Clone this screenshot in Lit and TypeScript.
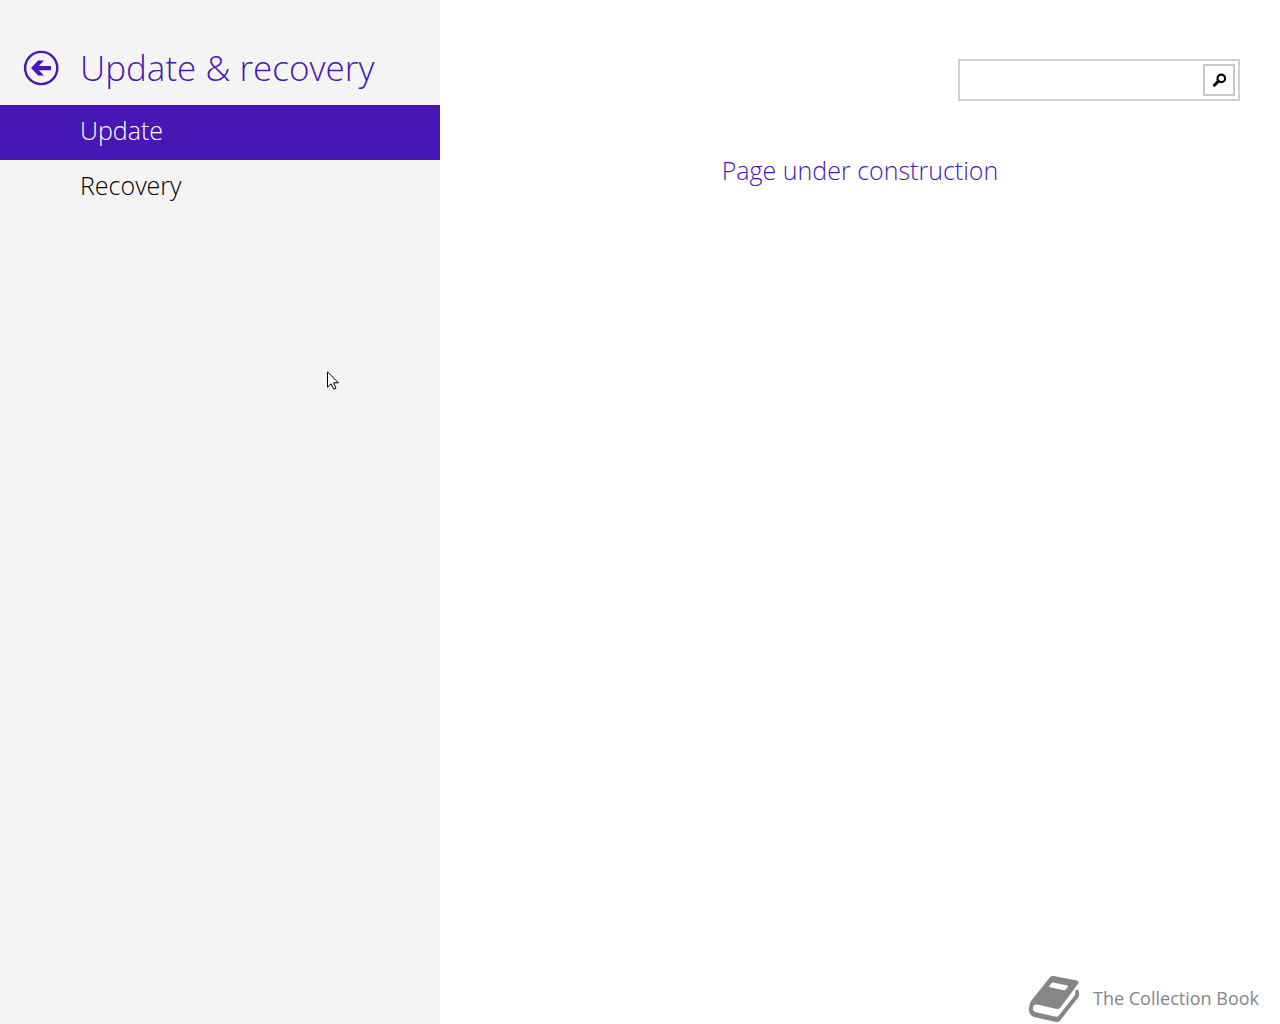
import { LitElement, html, css, svg } from "lit";
import { customElement, state } from "lit/decorators.js";

const backIcon = svg`
  <svg viewBox="0 0 36 36" width="36" height="36" aria-hidden="true">
    <circle cx="18.2" cy="18" r="16.1" fill="none" stroke="currentColor" stroke-width="2.4" />
    <path d="M8 18 L15.2 10.4 H21 L15.8 16 H28 V20.2 H15.8 L21 25.6 H15.2 Z" fill="currentColor" />
  </svg>`;

const searchIcon = svg`
  <svg viewBox="0 0 14 14" width="14" height="14" aria-hidden="true">
    <circle cx="9.3" cy="5.4" r="3.8" fill="none" stroke="currentColor" stroke-width="2.2" />
    <path d="M6.4 8.2 L2.4 12.2" stroke="currentColor" stroke-width="3" stroke-linecap="round" />
  </svg>`;

const bookIcon = svg`
  <svg viewBox="0 0 52 48" width="52" height="48" aria-hidden="true">
    <path
      fill="currentColor"
      fill-rule="evenodd"
      d="M22 2.2 Q23.5 0.6 25.7 1 L49 5.6 Q51.6 6.3 50.2 8.6 L32.5 32.6 Q31 34.4 28.8 33.9 L9 29.6 Q5 29.4 4.9 33 Q4.9 36.4 8 37.3 L28.3 41.8 Q29.8 42 30.8 40.6 L47.2 20 L47.3 16 Q49 13.8 50.6 15.6 Q51.2 17 51.1 19.6 Q51 21.4 50 22.8 L32.4 45.2 Q30.6 47.6 27.8 47 L6 42 Q0.6 40.2 0.9 33.6 Q1 28.6 3.6 25.2 Z
         M23.3 8.2 L21.2 11.2 Q21 12 21.8 12.2 L36 15.2 Q37.2 15.4 37.9 14.5 L40 11.6 Q40.4 10.7 39.4 10.5 L25 7.6 Q24 7.4 23.3 8.2 Z"
    />
  </svg>`;

const pointer = svg`
  <svg viewBox="0 0 12 19" width="12" height="19" aria-hidden="true">
    <path
      d="M0.5 0.8 V16.2 L4.1 12.8 L6.6 18.2 L9 17.2 L6.6 11.8 H11.4 Z"
      fill="#fff"
      stroke="#000"
      stroke-width="1"
    />
  </svg>`;

@customElement("app-root")
export class AppRoot extends LitElement {
  @state() private current = "Update";
  private pages = ["Update", "Recovery"];

  static styles = css`
    :host {
      display: block;
      position: relative;
      font-family: "Open Sans", "Noto Sans", sans-serif;
      font-weight: 300;
      --accent: #4617b4;
    }
    * {
      box-sizing: border-box;
    }
    .layout {
      display: flex;
      min-height: 100vh;
      background: #fff;
    }
    .side {
      flex: 0 0 440px;
      background: #f4f4f4;
      padding-top: 32px;
    }
    .head {
      display: flex;
      align-items: center;
      height: 73px;
      padding: 0 0 2px 23px;
      gap: 21px;
      color: var(--accent);
    }
    .back {
      display: flex;
      padding: 0;
      border: 0;
      background: none;
      color: inherit;
    }
    h1 {
      margin: 0;
      font-size: 35px;
      line-height: 48px;
      font-weight: 300;
      white-space: nowrap;
    }
    .item {
      display: block;
      padding: 0 80px;
      height: 55px;
      font-size: 25px;
      line-height: 50px;
      color: #000;
      text-decoration: none;
    }
    .item.active {
      background: var(--accent);
      color: #fff;
    }
    .main {
      flex: 1;
      min-width: 0;
      display: flex;
      flex-direction: column;
      padding-top: 59px;
    }
    .search {
      display: flex;
      align-items: center;
      align-self: flex-end;
      width: 282px;
      height: 42px;
      margin-right: 40px;
      padding: 3px;
      border: 2px solid #d0d0d0;
    }
    .search input {
      flex: 1;
      min-width: 0;
      height: 32px;
      border: 0;
      outline: 0;
      background: none;
      font: inherit;
      font-size: 16px;
    }
    .go {
      display: flex;
      align-items: center;
      justify-content: center;
      width: 32px;
      height: 32px;
      padding: 0;
      border: 2px solid #c8c8c8;
      background: #fff;
      color: #000;
    }
    .notice {
      flex: 1;
      margin: 49px 0 0;
      text-align: center;
      font-size: 25px;
      line-height: 40px;
      color: var(--accent);
    }
    .brand {
      display: flex;
      align-items: center;
      justify-content: flex-end;
      gap: 13px;
      padding: 0 21px 1px 0;
      font-size: 18px;
      line-height: 24px;
      font-weight: 400;
      color: #868686;
    }
    .brand span {
      padding-bottom: 2px;
    }
    .pointer {
      position: absolute;
      left: 327px;
      top: 371px;
      display: flex;
      pointer-events: none;
    }
  `;

  private open(event: Event, page: string) {
    event.preventDefault();
    this.current = page;
  }

  render() {
    return html`
      <div class="layout">
        <aside class="side">
          <header class="head">
            <button class="back" type="button" aria-label="Back">${backIcon}</button>
            <h1>Update &amp; recovery</h1>
          </header>
          <nav>
            ${this.pages.map(
              (page) => html`<a
                class="item ${page === this.current ? "active" : ""}"
                href="#${page.toLowerCase()}"
                @click=${(e: Event) => this.open(e, page)}
                >${page}</a
              >`
            )}
          </nav>
        </aside>
        <main class="main">
          <form class="search" role="search" @submit=${(e: Event) => e.preventDefault()}>
            <input type="text" aria-label="Search" />
            <button class="go" type="submit" aria-label="Search">${searchIcon}</button>
          </form>
          <p class="notice">Page under construction</p>
          <footer class="brand">${bookIcon}<span>The Collection Book</span></footer>
        </main>
      </div>
      <div class="pointer">${pointer}</div>
    `;
  }
}
